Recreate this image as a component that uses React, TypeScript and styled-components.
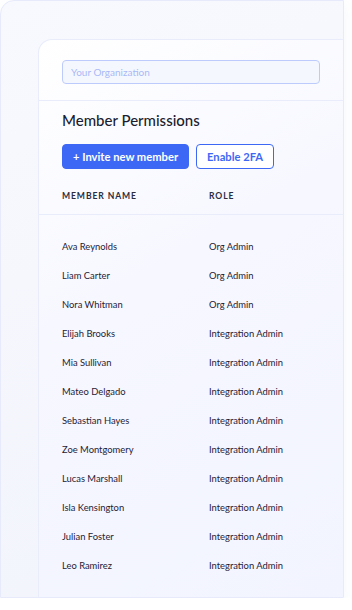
import styled, { createGlobalStyle } from "styled-components";

const GlobalStyle = createGlobalStyle`
  html, body {
    margin: 0;
    padding: 0;
    background: #ffffff;
  }
  body {
    font-family: Lato, "Noto Sans", sans-serif;
    -webkit-font-smoothing: antialiased;
  }
`;

const Frame = styled.div`
  box-sizing: border-box;
  width: 344px;
  height: 598px;
  display: flex;
  padding: 38px 0 0 37px;
  border: 1px solid #e6eafb;
  border-radius: 14px 0 0 0;
  background: linear-gradient(160deg, #f8f9fe 0%, #f2f4fc 100%);
  box-shadow: 0 6px 12px rgba(120, 135, 200, 0.08);
  overflow: hidden;
`;

const Card = styled.section`
  flex: 1;
  display: flex;
  flex-direction: column;
  border: 1px solid #e8ecfb;
  border-right: none;
  border-bottom: none;
  border-radius: 14px 0 0 0;
  background: linear-gradient(150deg, #ffffff 0%, #f6f7ff 45%, #f2f4ff 100%);
`;

const OrgBar = styled.div`
  padding: 20px 23px 16px 23px;
  border-bottom: 1px solid #e9edfb;
`;

const OrgInput = styled.input`
  box-sizing: border-box;
  width: 100%;
  height: 24px;
  padding: 0 8px;
  border: 1.5px solid #bccbfb;
  border-radius: 4px;
  background: #f5f7ff;
  font-family: Lato, "Noto Sans", sans-serif;
  font-size: 10px;
  color: #3a4470;
  outline: none;
  &::placeholder {
    color: #a9b9f6;
  }
`;

const Head = styled.div`
  display: flex;
  flex-direction: column;
  padding: 9px 23px 0 23px;
`;

const Title = styled.h2`
  margin: 0;
  font-size: 15px;
  line-height: 20px;
  font-weight: 500;
  color: #1b1e30;
`;

const Actions = styled.div`
  display: flex;
  gap: 7px;
  margin-top: 14px;
`;

const Button = styled.button<{ $outline?: boolean }>`
  box-sizing: border-box;
  height: 25px;
  padding: 0 10px;
  border-radius: 4px;
  border: 1px solid #3d68f6;
  background: ${({ $outline }) => ($outline ? "#ffffff" : "#3d68f6")};
  color: ${({ $outline }) => ($outline ? "#3d68f6" : "#ffffff")};
  font-family: Lato, "Noto Sans", sans-serif;
  font-size: 11.2px;
  font-weight: 700;
  cursor: pointer;
`;

const Columns = styled.div`
  display: grid;
  grid-template-columns: 147px 1fr;
  padding: 0 23px;
`;

const HeaderRow = styled(Columns)`
  padding-top: 21px;
  padding-bottom: 12px;
  border-bottom: 1px solid #e9edfb;
`;

const HeaderCell = styled.div`
  font-size: 8.6px;
  line-height: 12px;
  font-weight: 700;
  letter-spacing: 0.9px;
  color: #2a2d3f;
`;

const Body = styled.div`
  display: flex;
  flex-direction: column;
  padding-top: 17px;
`;

const Row = styled(Columns)`
  height: 29px;
  align-items: center;
`;

const Cell = styled.div`
  font-size: 9.4px;
  color: #1f2236;
`;

const members: Array<[string, string]> = [
  ["Ava Reynolds", "Org Admin"],
  ["Liam Carter", "Org Admin"],
  ["Nora Whitman", "Org Admin"],
  ["Elijah Brooks", "Integration Admin"],
  ["Mia Sullivan", "Integration Admin"],
  ["Mateo Delgado", "Integration Admin"],
  ["Sebastian Hayes", "Integration Admin"],
  ["Zoe Montgomery", "Integration Admin"],
  ["Lucas Marshall", "Integration Admin"],
  ["Isla Kensington", "Integration Admin"],
  ["Julian Foster", "Integration Admin"],
  ["Leo Ramirez", "Integration Admin"],
];

const App = () => {
  return (
    <>
      <GlobalStyle />
      <Frame>
        <Card>
          <OrgBar>
            <OrgInput placeholder="Your Organization" />
          </OrgBar>
          <Head>
            <Title>Member Permissions</Title>
            <Actions>
              <Button>+ Invite new member</Button>
              <Button $outline>Enable 2FA</Button>
            </Actions>
          </Head>
          <HeaderRow>
            <HeaderCell>MEMBER NAME</HeaderCell>
            <HeaderCell>ROLE</HeaderCell>
          </HeaderRow>
          <Body>
            {members.map(([name, role]) => (
              <Row key={name}>
                <Cell>{name}</Cell>
                <Cell>{role}</Cell>
              </Row>
            ))}
          </Body>
        </Card>
      </Frame>
    </>
  );
};

export default App;
